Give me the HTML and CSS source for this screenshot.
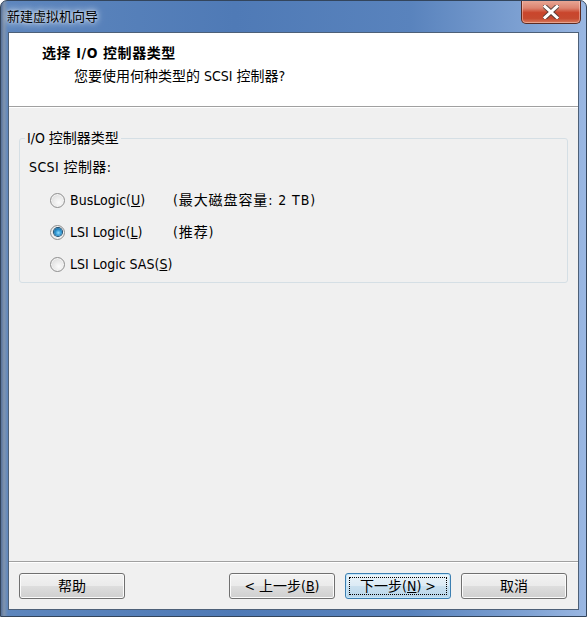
FILE: index.html
```html
<!DOCTYPE html>
<html lang="zh-CN">
<head>
<meta charset="utf-8">
<title>新建虚拟机向导</title>
<link rel="stylesheet" href="styles.css">
</head>
<body>
<div class="window">
  <div class="titlebar">
    <span class="title">新建虚拟机向导</span>
    <div class="close">
      <svg width="16" height="14" viewBox="0 0 16 14">
        <path d="M2 1.5 L14 12.5 M14 1.5 L2 12.5" stroke="#3a3a3a" stroke-width="5" stroke-linecap="square" fill="none" opacity="0.75"/>
        <path d="M2 1.5 L14 12.5 M14 1.5 L2 12.5" stroke="#ffffff" stroke-width="3" stroke-linecap="square" fill="none"/>
      </svg>
    </div>
  </div>
  <div class="client">
    <div class="header">
      <div class="h-title">选择 I/O 控制器类型</div>
      <div class="h-sub">您要使用何种类型的 SCSI 控制器?</div>
    </div>
    <div class="body">
      <fieldset class="group">
        <legend>I/O 控制器类型</legend>
        <div class="label">SCSI 控制器:</div>
        <div class="options">
          <div class="opt">
            <span class="radio"></span>
            <span class="opt-label">BusLogic(<u>U</u>)</span>
            <span class="note">(最大磁盘容量: 2 TB)</span>
          </div>
          <div class="opt">
            <span class="radio checked"></span>
            <span class="opt-label">LSI Logic(<u>L</u>)</span>
            <span class="note">(推荐)</span>
          </div>
          <div class="opt">
            <span class="radio"></span>
            <span class="opt-label">LSI Logic SAS(<u>S</u>)</span>
            <span class="note"></span>
          </div>
        </div>
      </fieldset>
    </div>
    <div class="footer">
      <button class="btn">帮助</button>
      <div class="btn-group">
        <button class="btn">&lt; 上一步(<u>B</u>)</button>
        <button class="btn default"><span class="focus">下一步(<u>N</u>) &gt;</span></button>
        <button class="btn">取消</button>
      </div>
    </div>
  </div>
</div>
</body>
</html>
```
FILE: styles.css
```css
* { box-sizing: border-box; }
html, body { margin: 0; padding: 0; background: #ffffff; }
body {
  font-family: "DejaVu Sans Condensed", "Noto Sans CJK SC", sans-serif;
  font-size: 14px;
  color: #000;
}
.window {
  width: 587px;
  height: 617px;
  border: 1px solid #33455c;
  border-radius: 7px 7px 0 0;
  background: linear-gradient(90deg, #56719a 0px, #7f93ad 3px, #5d86bd 7px, #4f7ab6 40%, #5983bd 70%, #7fa2d3 90%, #9ab7e2 100%);
  padding: 0 7px 6px 7px;
  display: flex;
  flex-direction: column;
  overflow: hidden;
}
.titlebar {
  height: 31px;
  display: flex;
  justify-content: space-between;
  align-items: flex-start;
  margin: 0 -1px 0 -1px;
}
.title {
  padding-top: 7px;
  font-size: 13px;
  line-height: 18px;
  color: #000;
  text-shadow: 0 0 6px #dfe9f6, 0 0 10px rgba(255,255,255,0.7), 0 0 3px rgba(255,255,255,0.6);
}
.close {
  width: 60px;
  height: 24px;
  margin-top: -1px;
  margin-right: -1px;
  border: 1px solid #5b2b22;
  border-top: none;
  border-radius: 0 0 5px 5px;
  background: linear-gradient(180deg, #e9aa99 0%, #dc8470 35%, #c9452c 55%, #c64a30 80%, #d87a5c 100%);
  box-shadow: inset 0 0 0 1px rgba(255,220,210,0.45);
  display: flex;
  align-items: center;
  justify-content: center;
}
.client {
  flex: 1;
  border: 1px solid #4d6078;
  background: #f0f0f0;
  display: flex;
  flex-direction: column;
}
.header {
  height: 74px;
  background: #ffffff;
  border-bottom: 1px solid #a0a0a0;
}
.h-title {
  padding: 10px 0 0 33px;
  line-height: 20px;
  font-weight: bold;
  letter-spacing: 0.6px;
}
.h-sub {
  padding: 3px 0 0 65px;
  line-height: 20px;
}
.body {
  flex: 1;
  border-top: 1px solid #ffffff;
  padding: 20px 10px 0 10px;
}
.group {
  margin: 0;
  padding: 0 0 2px 0;
  border: 1px solid #d5dfe5;
  border-radius: 3px;
  min-width: 0;
}
.group legend {
  margin-left: 5px;
  padding: 0 2px;
  line-height: 20px;
}
.label {
  margin-top: 9px;
  padding-left: 9px;
  line-height: 20px;
  letter-spacing: 0.4px;
}
.options {
  margin-top: 7px;
  padding-left: 30px;
  display: flex;
  flex-direction: column;
}
.opt {
  height: 32px;
  display: grid;
  grid-template-columns: 15px 98px auto;
  column-gap: 5px;
  align-items: center;
  white-space: nowrap;
}
.radio {
  width: 15px;
  height: 15px;
  border-radius: 50%;
  border: 1px solid #8f8f8f;
  background: radial-gradient(circle at 60% 65%, #fbfbfb 0%, #e6e6e6 55%, #cfcfcf 100%);
  box-shadow: inset 0 0 0 1px #f4f4f4;
  display: flex;
  align-items: center;
  justify-content: center;
}
.radio.checked::after {
  content: "";
  width: 8px;
  height: 8px;
  border-radius: 50%;
  background: radial-gradient(circle at 55% 60%, #8fdcff 0%, #2d93cf 45%, #0f4f7c 100%);
  box-shadow: 0 0 0 1px #1c4b6c;
}
.opt-label { line-height: 20px; }
.note { line-height: 20px; letter-spacing: 0.9px; }
.footer {
  height: 48px;
  border-top: 1px solid #a0a0a0;
  box-shadow: inset 0 1px 0 #ffffff;
  padding: 11px 11px 10px 10px;
  display: flex;
  align-items: flex-start;
}
.btn-group {
  margin-left: auto;
  display: flex;
  gap: 10px;
}
.btn {
  width: 106px;
  height: 26px;
  margin: 0;
  padding: 0;
  font-family: "DejaVu Sans Condensed", "Noto Sans CJK SC", sans-serif;
  font-size: 14px;
  color: #000;
  border: 1px solid #707070;
  border-radius: 3px;
  background: linear-gradient(180deg, #f2f2f2 0%, #ebebeb 48%, #dddddd 52%, #cfcfcf 100%);
  box-shadow: inset 0 0 0 1px #fbfbfb;
  display: flex;
  align-items: center;
  justify-content: center;
  line-height: 18px;
}
.btn.default {
  border-color: #3c7fb1;
  background: linear-gradient(180deg, #eaf3f9 0%, #dcebf5 48%, #c9e0ef 52%, #b9d6ea 100%);
  box-shadow: inset 0 0 0 1px #c3e6fa;
  padding: 3px;
}
.focus {
  flex: 1;
  align-self: stretch;
  border: 1px dotted #000;
  display: flex;
  align-items: center;
  justify-content: center;
}
```
